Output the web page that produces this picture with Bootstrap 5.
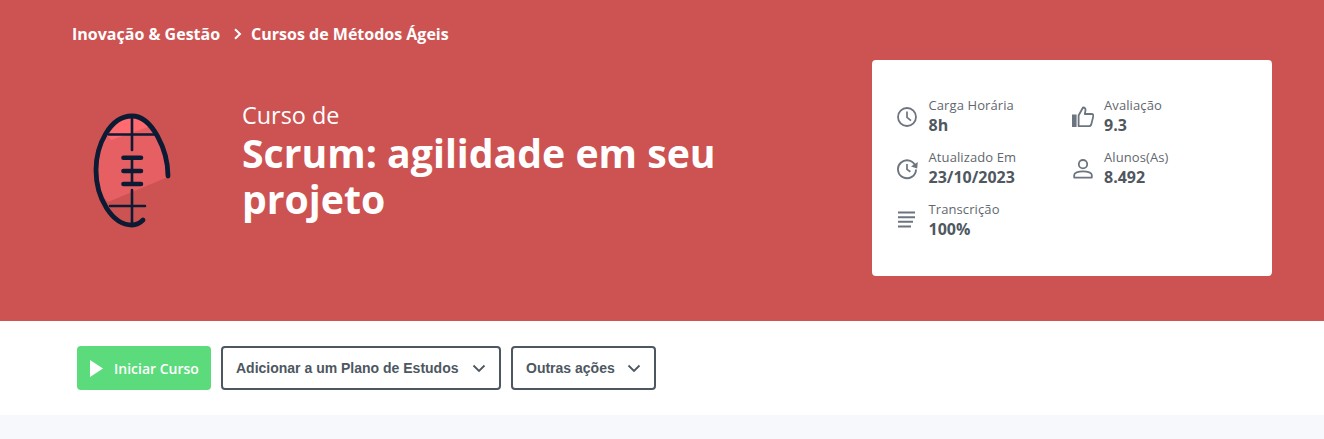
<!DOCTYPE html>
<html lang="pt-BR">
<head>
<meta charset="utf-8">
<title>Curso de Scrum</title>
<link href="https://cdn.jsdelivr.net/npm/bootstrap@5.3.0/dist/css/bootstrap.min.css" rel="stylesheet">
<style>
html,body{height:439px;overflow:hidden}
body{background:#f6f8fb;font-family:"Open Sans",sans-serif;color:#4d5761}
.hero-band{background:#cd5353;height:321px;padding:0 52px 0 72px;color:#fff}
.crumbs{height:60px;padding-top:8px;font-size:16px;font-weight:700;line-height:20px}
.crumbs a{color:#fff;text-decoration:none}
.crumb-sep{margin:0 9px 0 13px}
.hero-main{width:800px}
.ball-wrap{width:170px;flex:none;padding-top:30px}
.title-wrap{padding-top:40px;width:520px}
.title-pre{font-size:23.4px;line-height:30px;font-weight:400}
.title-main{font-size:39.2px;line-height:46px;font-weight:700;margin:0}
.info-box{width:400px;height:216px;background:#fff;border-radius:4px;padding:36px 24px 0 24px;color:#50585f}
.info-grid{display:grid;grid-template-columns:175.5px 1fr;grid-auto-rows:52px}
.info-item{display:flex;align-items:center;height:40px;gap:10.5px}
.info-ico{width:22px;height:22px;flex:none;margin-top:2px}
.info-label{font-size:13px;line-height:18px;font-weight:400;display:block;letter-spacing:.1px;color:#5f676f;margin:-1px 0 1px}
.info-value{font-size:16px;line-height:20px;font-weight:700;display:block}
.action-band{background:#fff;height:94px;padding:25px 0 0 77px}
.act-btn{height:44px;border-radius:4px;font-size:14px;font-weight:700;display:inline-flex;align-items:center;padding:0}
.act-start{width:134px;background:#5cdb7c;border:0;color:#fff;font-family:"Open Sans",sans-serif;font-weight:600;padding-left:13px;gap:10px}
.act-start:hover{background:#5cdb7c;color:#fff}
.act-outline{background:#fff;border:2px solid #4d5761;color:#4d5761;font-family:"Liberation Sans",sans-serif;padding:0 13px;justify-content:space-between}
.act-plan{width:280px}
.act-other{width:145px}
.act-gap{gap:10px}
</style>
</head>
<body>
<header class="hero-band">
  <nav class="crumbs d-flex align-items-center">
    <a href="#">Inovação &amp; Gestão</a>
    <svg class="crumb-sep" width="9" height="12" viewBox="0 0 9 12" aria-hidden="true"><path d="M2 1.2 7 6 2 10.8" fill="none" stroke="#fff" stroke-width="2"/></svg>
    <a href="#">Cursos de Métodos Ágeis</a>
  </nav>
  <div class="d-flex justify-content-between">
    <div class="hero-main d-flex">
      <div class="ball-wrap">
        <svg width="130" height="150" viewBox="0 0 130 150" style="margin-left:-12px" aria-hidden="true">
          <path d="M38 97C43 106 46 110 48 112L108 87C108 60 92 26 72 26C50 26 36 55 36 80C36 86 37 92 38 97Z" fill="#e65f63"/>
          <path d="M72 26C62 26 54 34 48 46L51 50L88 37C83 30 78 26 72 26Z" fill="#ff6b6f"/>
          <path d="M108 86C108 60 92 26 72 26C50 26 36 55 36 80C36 108 52 135 72 135C76 135 80 133 83 130" fill="none" stroke="#0c1a33" stroke-width="4.8" stroke-linecap="round"/>
          <path d="M72 26V60M72 100V135M49 44.5H94M50 116H85" fill="none" stroke="#0c1a33" stroke-width="2.6" stroke-linecap="round"/>
          <path d="M72 66V95" fill="none" stroke="#0c1a33" stroke-width="2.6"/>
          <path d="M63.5 67.7H81M63.5 81H81M63.5 94H81" fill="none" stroke="#0c1a33" stroke-width="4.6" stroke-linecap="round"/>
        </svg>
      </div>
      <div class="title-wrap">
        <div class="title-pre">Curso de</div>
        <h1 class="title-main">Scrum: agilidade em seu projeto</h1>
      </div>
    </div>
    <aside class="info-box">
      <div class="info-grid">
        <div class="info-item">
          <svg class="info-ico" viewBox="0 0 22 22" aria-hidden="true"><circle cx="11" cy="11" r="9" fill="none" stroke="#6c757f" stroke-width="1.8"/><path d="M11 5.5V11.4L15 14.6" fill="none" stroke="#6c757f" stroke-width="1.7"/></svg>
          <div><span class="info-label">Carga Horária</span><span class="info-value">8h</span></div>
        </div>
        <div class="info-item">
          <svg class="info-ico" viewBox="0 0 22 22" aria-hidden="true"><path d="M0 8.5H4.6V21H0Z" fill="#6c757f"/><path d="M6.6 9.5 11 1.5C13.2 1.5 13.8 3 13.4 4.8L12.8 8H19.6C21 8 21.6 9.2 21.2 10.6L19.2 18.6C18.8 19.8 18 20.2 16.8 20.2H6.6Z" fill="none" stroke="#6c757f" stroke-width="1.8" stroke-linejoin="round"/></svg>
          <div><span class="info-label">Avaliação</span><span class="info-value">9.3</span></div>
        </div>
        <div class="info-item">
          <svg class="info-ico" viewBox="0 0 22 22" aria-hidden="true"><path d="M19.6 8.6A9 9 0 1 0 20 11.4" fill="none" stroke="#6c757f" stroke-width="1.9"/><path d="M21.8 4 21.2 10.6 15 8.4Z" fill="#6c757f"/><path d="M11 6V11.4L14.4 13.8" fill="none" stroke="#6c757f" stroke-width="1.7"/></svg>
          <div><span class="info-label">Atualizado Em</span><span class="info-value">23/10/2023</span></div>
        </div>
        <div class="info-item">
          <svg class="info-ico" viewBox="0 0 22 22" aria-hidden="true"><circle cx="11" cy="6.2" r="4.2" fill="none" stroke="#6c757f" stroke-width="1.8"/><path d="M2.2 19.6V17C2.2 15 6 13.4 11 13.4S19.8 15 19.8 17V19.6Z" fill="none" stroke="#6c757f" stroke-width="1.8" stroke-linejoin="round"/></svg>
          <div><span class="info-label">Alunos(As)</span><span class="info-value">8.492</span></div>
        </div>
        <div class="info-item">
          <svg class="info-ico" viewBox="0 0 22 22" aria-hidden="true"><path d="M2 2.5H19M2 7.2H19M2 11.8H17M2 16.5H15" fill="none" stroke="#6c757f" stroke-width="2"/></svg>
          <div><span class="info-label">Transcrição</span><span class="info-value">100%</span></div>
        </div>
      </div>
    </aside>
  </div>
</header>
<section class="action-band d-flex align-items-start act-gap">
  <button type="button" class="btn act-btn act-start">
    <svg width="14" height="17" viewBox="0 0 14 17" aria-hidden="true"><path d="M0 0 13 8.5 0 17Z" fill="#fff"/></svg>
    Iniciar Curso
  </button>
  <button type="button" class="btn act-btn act-outline act-plan">
    Adicionar a um Plano de Estudos
    <svg width="14" height="9" viewBox="0 0 14 9" aria-hidden="true"><path d="M1.5 1.5 7 7l5.5-5.5" fill="none" stroke="#4d5761" stroke-width="1.8"/></svg>
  </button>
  <button type="button" class="btn act-btn act-outline act-other">
    Outras ações
    <svg width="14" height="9" viewBox="0 0 14 9" aria-hidden="true"><path d="M1.5 1.5 7 7l5.5-5.5" fill="none" stroke="#4d5761" stroke-width="1.8"/></svg>
  </button>
</section>
</body>
</html>
